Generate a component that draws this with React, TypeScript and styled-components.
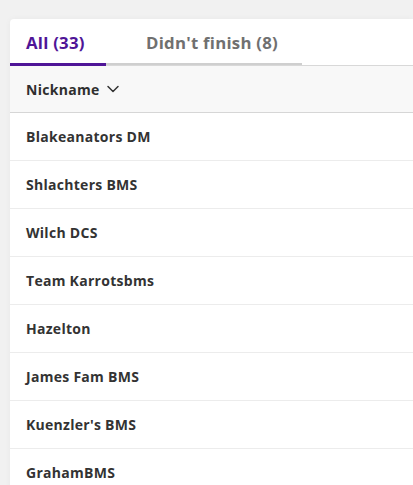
import styled, { createGlobalStyle } from "styled-components";

const GlobalStyle = createGlobalStyle`
  html, body {
    margin: 0;
    padding: 0;
    background: #f1f1f1;
    font-family: "Open Sans", "Liberation Sans", sans-serif;
  }
`;

const Page = styled.div`
  padding: 19px 0 0 10px;
  height: 485px;
  box-sizing: border-box;
  overflow: hidden;
`;

const Card = styled.div`
  background: #ffffff;
  border-radius: 4px 0 0 0;
  box-shadow: 0 0 6px rgba(0, 0, 0, 0.04);
  min-height: 100%;
`;

const Tabs = styled.div`
  display: flex;
  height: 46px;
  border-bottom: 1px solid #d8d8d8;
`;

const Tab = styled.div<{ $active?: boolean; $width: number }>`
  display: flex;
  align-items: center;
  box-sizing: border-box;
  width: ${(p) => p.$width}px;
  padding: 3px 0 0 ${(p) => (p.$active ? 16 : 40)}px;
  font-size: 16.8px;
  font-weight: 700;
  letter-spacing: 0.25px;
  color: ${(p) => (p.$active ? "#4f1597" : "#707070")};
  border-bottom: ${(p) => (p.$active ? "3px solid #4f1597" : "2px solid #cfcfcf")};
  margin-bottom: ${(p) => (p.$active ? "-1px" : "0")};
`;

const HeaderRow = styled.div`
  display: flex;
  align-items: center;
  gap: 6px;
  height: 46px;
  padding-left: 16px;
  background: #f8f8f8;
  border-bottom: 1px solid #d6d6d6;
  font-size: 14px;
  font-weight: 700;
  letter-spacing: 0.3px;
  color: #2f2f2f;
`;

const Row = styled.div`
  display: flex;
  align-items: center;
  height: 47px;
  padding-left: 16px;
  border-bottom: 1px solid #ececec;
  font-size: 14px;
  font-weight: 700;
  letter-spacing: 0.28px;
  color: #333333;
`;

const names = [
  "Blakeanators DM",
  "Shlachters BMS",
  "Wilch DCS",
  "Team Karrotsbms",
  "Hazelton",
  "James Fam BMS",
  "Kuenzler's BMS",
  "GrahamBMS",
];

function Chevron() {
  return (
    <svg width="14" height="14" viewBox="0 0 14 14" fill="none">
      <path d="M2 4.5 L7 9.5 L12 4.5" stroke="#333" strokeWidth="1.5" strokeLinecap="round" strokeLinejoin="round" />
    </svg>
  );
}

export default function App() {
  return (
    <>
      <GlobalStyle />
      <Page>
        <Card>
          <Tabs>
            <Tab $active $width={96}>All (33)</Tab>
            <Tab $width={196}>Didn't finish (8)</Tab>
          </Tabs>
          <HeaderRow>
            Nickname <Chevron />
          </HeaderRow>
          {names.map((n) => (
            <Row key={n}>{n}</Row>
          ))}
        </Card>
      </Page>
    </>
  );
}
